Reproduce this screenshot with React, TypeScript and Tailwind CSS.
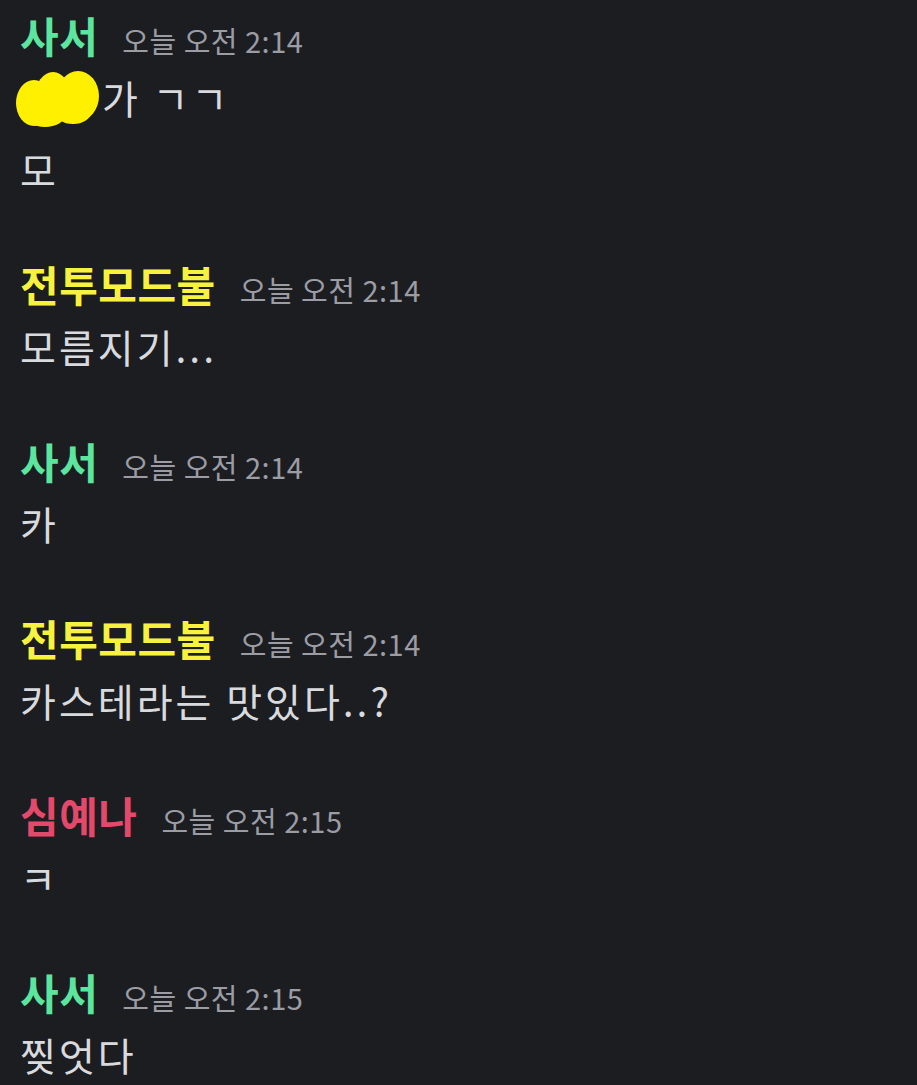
import React from "react";

type Message = { content: React.ReactNode };

interface ChatGroup {
  author: string;
  color: string;
  time: string;
  messages: Message[];
}

function Scribble() {
  // hand-drawn yellow censor mark over the name
  return (
    <svg
      width="86"
      height="60"
      viewBox="0 0 86 60"
      className="relative -top-[4px] -ml-[5px] mr-[1px] inline-block align-middle"
    >
      <g fill="#fff000">
        <ellipse cx="19" cy="34" rx="18" ry="23" />
        <ellipse cx="38" cy="28" rx="18" ry="25" />
        <ellipse cx="63" cy="27" rx="21" ry="25" />
        <ellipse cx="30" cy="46" rx="20" ry="12" />
        <ellipse cx="58" cy="43" rx="18" ry="12" />
      </g>
    </svg>
  );
}

const GROUPS: ChatGroup[] = [
  {
    author: "사서",
    color: "text-[#5ce59f]",
    time: "오늘 오전 2:14",
    messages: [
      {
        content: (
          <>
            <Scribble />가 ㄱㄱ
          </>
        ),
      },
      { content: "모" },
    ],
  },
  { author: "전투모드불", color: "text-[#f7f23e]", time: "오늘 오전 2:14", messages: [{ content: "모름지기..." }] },
  { author: "사서", color: "text-[#5ce59f]", time: "오늘 오전 2:14", messages: [{ content: "카" }] },
  { author: "전투모드불", color: "text-[#f7f23e]", time: "오늘 오전 2:14", messages: [{ content: "카스테라는 맛있다..?" }] },
  { author: "심예나", color: "text-[#e4486b]", time: "오늘 오전 2:15", messages: [{ content: "ㅋ" }] },
  { author: "사서", color: "text-[#5ce59f]", time: "오늘 오전 2:15", messages: [{ content: "찢엇다" }] },
];

export default function App() {
  return (
    <div
      className="h-[1085px] w-[917px] overflow-hidden bg-[#1c1d21] px-[20px] pt-[13px]"
      style={{ fontFamily: '"Noto Sans CJK KR", "Noto Sans", sans-serif' }}
    >
      <div className="flex flex-col gap-[63px]">
        {GROUPS.map((group, i) => (
          <div key={i} className="flex flex-col">
            <div className="flex h-[54px] items-baseline gap-[24px] leading-[44px]">
              <span className={`text-[42px] font-bold tracking-[0.5px] ${group.color}`}>{group.author}</span>
              <span className="text-[29px] tracking-[0.5px] text-[#9b9ca4]">{group.time}</span>
            </div>
            <div className="flex flex-col gap-[12px]">
              {group.messages.map((m, j) => (
                <div
                  key={j}
                  className="h-[60px] whitespace-nowrap text-[39px] leading-[60px] tracking-[3px] text-[#d9dade]"
                >
                  {m.content}
                </div>
              ))}
            </div>
          </div>
        ))}
      </div>
    </div>
  );
}
